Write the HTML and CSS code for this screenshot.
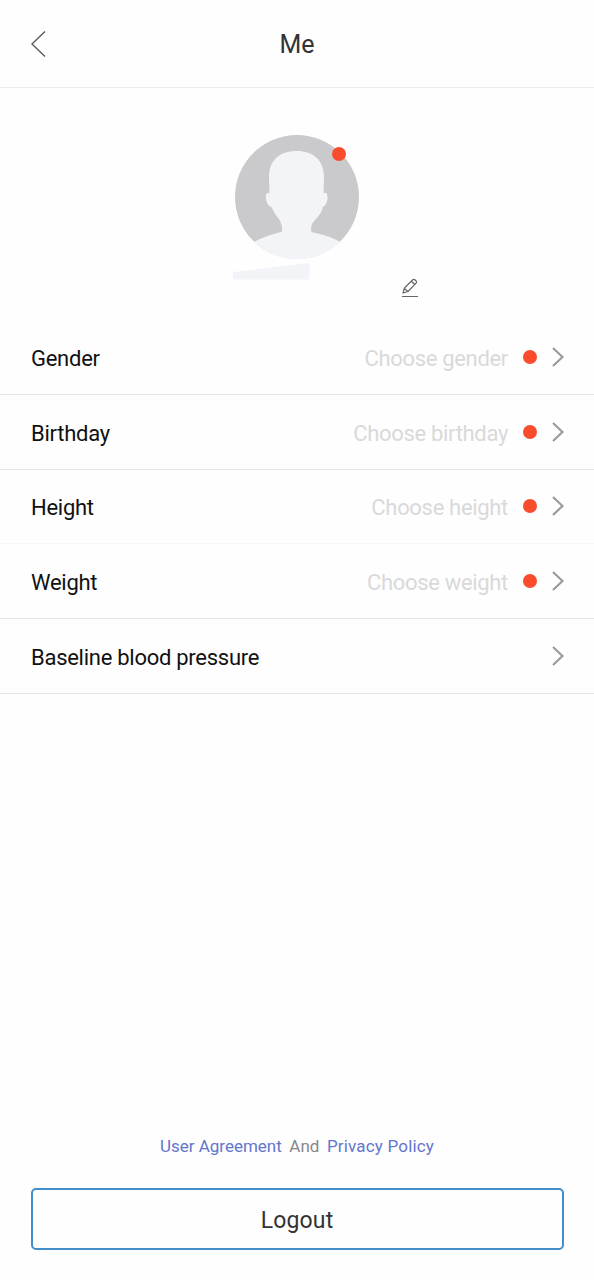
FILE: index.html
```html
<!DOCTYPE html>
<html lang="en">
<head>
<meta charset="utf-8">
<title>Me</title>
<link rel="stylesheet" href="styles.css">
</head>
<body>
<div class="screen">
  <header class="header">
    <svg class="back" width="18" height="30" viewBox="0 0 18 30"><path d="M16 2.500 3 15l13 12.500"/></svg>
    <h1 class="title">Me</h1>
  </header>
  <section class="profile">
    <div class="avatar">
      <svg class="portrait" width="124" height="124" viewBox="0 0 124 124">
        <circle cx="62" cy="62" r="62" fill="#cacacc"/>
        <path fill="#f2f4f7" d="M19 107C29 101 40 99 47 96.500C47.500 93 46.500 88 44 84C40 80 38 75 36.500 72C32 71 29.500 63 31.500 59Q32.500 57 34.500 58L34 42C34 25 45 16 61.500 16S89 25 89 42L88.500 58Q91 57 92 59C93.500 63 92 70 88 72C87 76 85 80 80 85C76 89 75.500 93 76.500 97C84 99 96 101 105 107A62.600 62.600 0 0 1 19 107Z"/>
      </svg>
      <span class="dot avatar-dot"></span>
    </div>
    <div class="name-row">
      <svg class="name-mask" width="77" height="18" viewBox="0 0 77 18"><path d="M0 9Q40 4 76.500 0V16.500H0Z"/></svg>
      <svg class="edit" width="18" height="20" viewBox="0 0 18 20"><path d="M1 18.500H17M2 15 3.500 10 11.800 1.800Q13 1 14.100 2L15.300 3.200Q16.100 4.200 15.100 5.200L7 13.500ZM10.400 3.200 13.800 6.500M3.500 10.300 6.700 13.500"/></svg>
    </div>
  </section>
  <main class="list">
    <div class="row"><span class="label">Gender</span><span class="value">Choose gender</span><span class="dot"></span><svg class="chevron" width="14" height="22" viewBox="0 0 14 22"><path d="M2 2 11.500 11 2 20"/></svg></div>
    <div class="row"><span class="label">Birthday</span><span class="value">Choose birthday</span><span class="dot"></span><svg class="chevron" width="14" height="22" viewBox="0 0 14 22"><path d="M2 2 11.500 11 2 20"/></svg></div>
    <div class="row row-faint"><span class="label">Height</span><span class="value">Choose height</span><span class="dot"></span><svg class="chevron" width="14" height="22" viewBox="0 0 14 22"><path d="M2 2 11.500 11 2 20"/></svg></div>
    <div class="row"><span class="label">Weight</span><span class="value">Choose weight</span><span class="dot"></span><svg class="chevron" width="14" height="22" viewBox="0 0 14 22"><path d="M2 2 11.500 11 2 20"/></svg></div>
    <div class="row"><span class="label">Baseline blood pressure</span><svg class="chevron" width="14" height="22" viewBox="0 0 14 22"><path d="M2 2 11.500 11 2 20"/></svg></div>
  </main>
  <footer class="footer">
    <p class="legal"><a class="link">User Agreement</a><span>And</span><a class="link link-privacy">Privacy Policy</a></p>
    <button class="logout">Logout</button>
  </footer>
</div>
</body>
</html>
```
FILE: styles.css
```css
* { box-sizing: border-box; }
body { margin: 0; background: #fefefe; font-family: Roboto, "Liberation Sans", sans-serif; }
.screen { height: 1280px; display: flex; flex-direction: column; }
.header { height: 88px; display: grid; grid-template-columns: 30px 1fr 30px; align-items: center; padding: 0 29px; border-bottom: 1px solid #ebebeb; }
.back { fill: none; stroke: #5c5c5c; stroke-width: 1.4; }
.title { margin: 0; padding-top: 2px; text-align: center; font-size: 25px; line-height: 30px; font-weight: 400; color: #333; }
.profile { height: 232px; padding-top: 47px; display: flex; flex-direction: column; align-items: center; }
.avatar { position: relative; width: 124px; height: 124px; }
.portrait { display: block; overflow: visible; }
.dot { width: 14px; height: 14px; border-radius: 50%; background: #f94c2d; flex: none; }
.avatar-dot { position: absolute; left: 97px; top: 12px; }
.name-row { align-self: stretch; display: flex; align-items: flex-start; padding: 4px 0 0 233px; gap: 91px; }
.name-mask { fill: #f2f4f7; }
.edit { margin-top: 15px; fill: none; stroke: #666; stroke-width: 1.2; stroke-linejoin: round; }
.row { height: 74.75px; display: flex; align-items: center; padding: 0 29px 0 31px; border-bottom: 1px solid #e6e6e6; font-size: 22px; letter-spacing: -0.27px; }
.row-faint { border-bottom-color: #f7f7f7; }
.label { flex: 1; color: #111; padding-top: 3px; }
.value { color: #d9d9d9; margin-right: 15px; padding-top: 3px; letter-spacing: -0.32px; }
.chevron { margin-left: 14px; fill: none; stroke: #999; stroke-width: 2.1; }
.footer { margin-top: auto; padding: 0 30px 30px; }
.legal { margin: 0 0 31px; display: flex; justify-content: center; gap: 7.5px; font-size: 17px; line-height: 22px; color: #888; }
.link { color: #6375cf; }
.link-privacy { letter-spacing: 0.18px; }
.logout { display: block; width: 533px; height: 62px; margin-left: 0.5px; padding: 3px 0 0; border: 2px solid #438ec9; border-radius: 5px; background: #fefefe; font: 400 23px Roboto, "Liberation Sans", sans-serif; letter-spacing: 0.15px; color: #333; }
```
